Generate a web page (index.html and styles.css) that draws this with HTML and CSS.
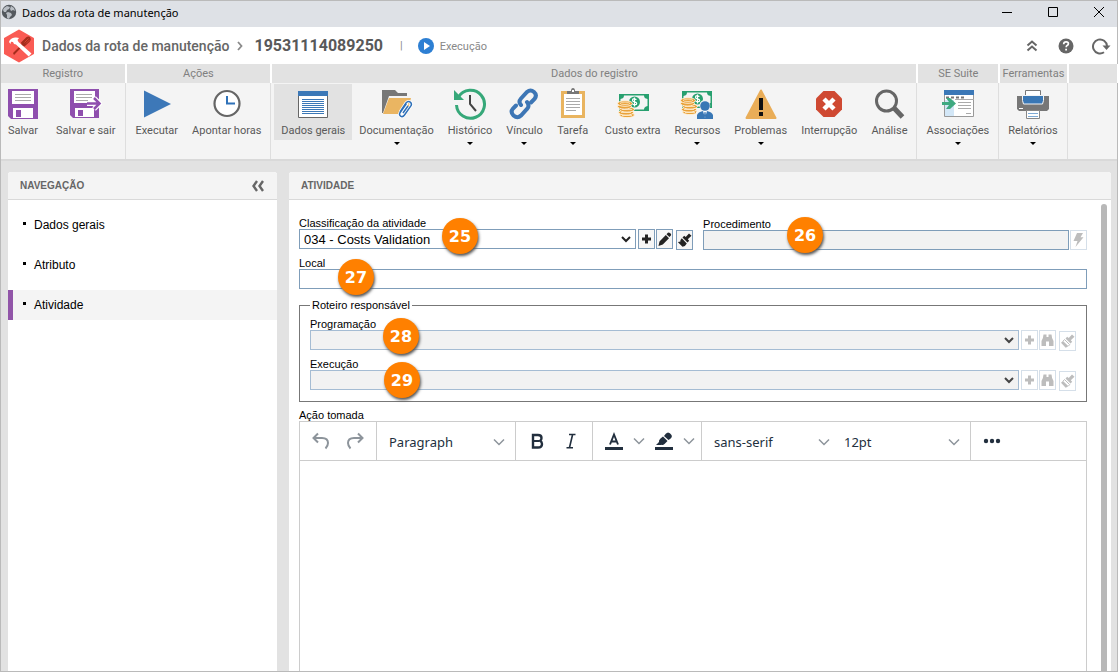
FILE: index.html
```html
<!DOCTYPE html>
<html lang="pt-BR">
<head>
<meta charset="utf-8">
<title>Dados da rota de manutenção</title>
<link rel="stylesheet" href="styles.css">
</head>
<body>
<svg class="defs" aria-hidden="true">
  <defs>
    <symbol id="plus" viewBox="0 0 15 18"><path d="M6 4.500h3v3h3v3H9v3H6v-3H3v-3h3z"/></symbol>
    <symbol id="pencil" viewBox="0 0 15 18"><path d="M1.500 16l1-4.500L8.800 5l3.200 3.200L5.800 14.500zM9.500 4.200l1.400-1.400q1-.8 2 .1l.9.900q.8 1-.1 2l-1.300 1.300z"/></symbol>
    <symbol id="brush" viewBox="0 0 15 18"><path d="M12 2.500l2.500 2.200-3.700 3.600 1.400 1.500-1.700 1.700-5-5L7.200 4.800l1.500 1.300zM4.800 7.300l5 5.100q-1.300 2.800-4.300 3.400L1 11.200l1.300-.8.800.9.400-2.300z"/></symbol>
    <symbol id="brush-open" viewBox="0 0 15 18"><path d="M12 2.500l2.500 2.200-3.700 3.600 1.400 1.500-1.700 1.700-5-5L7.200 4.800l1.500 1.300zM1 10.700l4.700 5q1.500-.4 2.500-1.600L3 9z"/><path d="M4.500 7.500l5.200 5.200-1.600 1.600M4.500 7.500L3 9.200" fill="none" stroke="currentColor"/></symbol>
    <symbol id="binoculars" viewBox="0 0 15 18"><path d="M3.500 3.500h3V6h2V3.500h3l.6 3.500 1.400 3v5H9v-4.500H6V15H1.500v-5l1.400-3z"/></symbol>
    <symbol id="bolt" viewBox="0 0 15 18"><path d="M6 2h6L9.500 6.300H12.500L4.500 16l2-6H2.500z"/></symbol>
    <symbol id="chevron" viewBox="0 0 10 7"><path d="M1 1l4 4 4-4" fill="none" stroke="currentColor" stroke-width="2"/></symbol>
    <symbol id="thin-chevron" viewBox="0 0 12 8"><path d="M1 1.500l5 5 5-5" fill="none" stroke="#8d949b" stroke-width="1.500"/></symbol>
    <symbol id="cash" viewBox="0 0 32 32">
      <path fill="#27a06f" d="M2 6h30v17H2z"/><path fill="#f4f4f4" d="M7 7.500h20q0 3 3.500 3.500v7q-3.500.5-3.500 3.500H7q0-3-3.500-3.500v-7Q7 10.500 7 7.500z"/>
      <circle cx="17.500" cy="14" r="5.500" fill="#27a06f"/><path d="M19.500 11.500q-4-1.500-4 .7 0 1.300 2 1.600 2.200.3 2.200 1.700 0 2-4.200.7M17.500 9.500v9" fill="none" stroke="#fff" stroke-width="1.200"/>
      <g fill="#e9a23b" stroke="#fff3dc" stroke-width=".9"><ellipse cx="10" cy="27" rx="7.500" ry="2.600"/><ellipse cx="9" cy="24.500" rx="7.500" ry="2.600"/><ellipse cx="10" cy="21.500" rx="7.500" ry="2.600"/><ellipse cx="7.500" cy="18.500" rx="7" ry="2.600"/><ellipse cx="8" cy="15.500" rx="7.500" ry="2.800"/></g>
      <g fill="none" stroke="#fff3dc" stroke-width=".7"><ellipse cx="8" cy="15.300" rx="4.800" ry="1.200"/><path d="M5 21.500h10M4 24.500h10M5 27.500h10"/></g>
    </symbol>
  </defs>
</svg>
<div class="window">
  <header class="titlebar">
    <svg class="globe" width="16" height="16" viewBox="0 0 16 16"><circle cx="8" cy="8" r="7.200" fill="#54595e"/><path d="M3 4l3-2 3 1-1 2-2 1-1 2H3L2 6zM10 2l3 2 1 3-2-1-2 1-1-2zM7 8l3 1 1 2-2 2-1 2-2-1V11L5 9z" fill="#b9bec4"/></svg>
    <span class="titlebar-text">Dados da rota de manutenção</span>
    <div class="window-controls">
      <button type="button" aria-label="Minimizar"><svg width="12" height="12"><path d="M1 6.500h10" stroke="#000"/></svg></button>
      <button type="button" aria-label="Maximizar"><svg width="12" height="12"><path d="M1.500 1.500h9v9h-9z" fill="none" stroke="#000"/></svg></button>
      <button type="button" aria-label="Fechar"><svg width="12" height="12"><path d="M1 1l10 10M11 1L1 11" stroke="#000"/></svg></button>
    </div>
  </header>

  <div class="heading">
    <svg class="module-icon" width="32" height="34" viewBox="0 0 32 34"><path d="M16 1.500L30 9.500v15L16 32.500 2 24.500v-15z" fill="#fa5b54" stroke="#fa5b54" stroke-width="2" stroke-linejoin="round"/><path d="M10 24l8.500-8.500-.5-2 5-5q3-2 4.500.5 1 2-1 4l-5 4.500-2-.2L11 26z" fill="#a52c1c"/><path d="M21.500 13.500l4-4M23 14.500l3.500-3.500" stroke="#d8402f"/><path d="M6 13q1-4 6-4.500 3-.2 4 .5l-1.500 2 1 2 13 11.500-2.800 3L13 15.500l-2-.5-1-2-2-.2L7.500 15z" fill="#fff"/></svg>
    <h1>Dados da rota de manutenção</h1>
    <svg class="crumb" width="6" height="10"><path d="M1 1l3.500 4L1 9" fill="none" stroke="#8a8a8a" stroke-width="1.800"/></svg>
    <strong class="record">19531114089250</strong>
    <span class="bar">|</span>
    <svg class="play" width="16" height="16"><circle cx="8" cy="8" r="8" fill="#2d7fd3"/><path d="M6 4l6 4-6 4z" fill="#fff"/></svg>
    <span class="status">Execução</span>
    <div class="heading-actions">
      <button type="button" aria-label="Recolher"><svg width="18" height="18"><path d="M4.500 8.500L9 4.500l4.500 4M4.500 13.500L9 9.500l4.500 4" fill="none" stroke="#666" stroke-width="2"/></svg></button>
      <button type="button" aria-label="Ajuda"><svg width="18" height="18"><circle cx="9" cy="9" r="7.500" fill="#666"/><path d="M6.700 7.200q0-2.300 2.400-2.300 2.300 0 2.300 1.900 0 1.100-1.300 1.800-.9.500-.9 1.700" fill="none" stroke="#fff" stroke-width="1.700"/><path d="M8.200 11.700H10v1.700H8.200z" fill="#fff"/></svg></button>
      <button type="button" aria-label="Atualizar"><svg width="20" height="18"><path d="M13 15.200A7 7 0 1 1 16 9" fill="none" stroke="#666" stroke-width="2"/><path d="M11.500 8.500h8L15.500 13z" fill="#666"/></svg></button>
    </div>
  </div>

  <nav class="ribbon" aria-label="Ferramentas">
    <section class="group first">
      <h2>Registro</h2>
      <div class="tools">
        <button type="button" class="tool"><svg width="32" height="32"><path fill="#8f4fae" d="M1 1h30v30H4l-3-3z"/><path fill="#fff" d="M5 3h22v13H5zM6 20h20v10H6z"/><path d="M8 6.500h16M8 9.500h16M8 12.500h16" stroke="#aaa"/><path fill="#8f4fae" d="M9 22h5v7H9z"/></svg><span>Salvar</span></button>
        <button type="button" class="tool wide"><svg width="32" height="32"><path fill="#8f4fae" d="M0 1h29v29H3l-3-3z"/><path fill="#fff" d="M4 3h21v12H4zM5 20h19v9H5z"/><path d="M6 6.500h16M6 9.500h16M6 12.500h12" stroke="#aaa"/><path fill="#8f4fae" d="M8 22h5v6H8z"/><path d="M17 15.500h9M24 10l5.500 5.500L24 21" fill="none" stroke="#fff" stroke-width="5"/><path d="M17 15.500h12M24 10l5.500 5.500L24 21" fill="none" stroke="#8f4fae" stroke-width="2.500"/></svg><span>Salvar e sair</span></button>
      </div>
    </section>
    <section class="group roomy">
      <h2>Ações</h2>
      <div class="tools">
        <button type="button" class="tool"><svg width="32" height="32"><path fill="#3d78b8" d="M3 2.500L30 16 3 29.500z"/></svg><span>Executar</span></button>
        <button type="button" class="tool"><svg width="32" height="32"><circle cx="16" cy="15.500" r="12.500" fill="#fff" stroke="#666" stroke-width="2.200"/><path d="M16 8v7.500h8" fill="none" stroke="#2f72b9" stroke-width="2"/></svg><span>Apontar horas</span></button>
      </div>
    </section>
    <section class="group roomy">
      <h2>Dados do registro</h2>
      <div class="tools">
        <button type="button" class="tool active"><svg width="32" height="32"><path fill="#fff" stroke="#666" d="M1.500 3.500h29v26h-29z"/><path fill="#3b78b7" d="M1 3h30v5H1z"/><path d="M5 11.500h22M5 13.500h22M5 15.500h22M5 17.500h22M5 19.500h22M5 21.500h22M5 23.500h22M5 25.500h22" stroke="#3b78b7"/></svg><span>Dados gerais</span></button>
        <button type="button" class="tool menu"><svg width="32" height="32"><path fill="#777" d="M1 2h13l3 3h9v3H8L2 25H1z"/><path fill="#eab562" d="M8 10h22l-4 16H2z"/><path d="M19 24l6-9q2-2.500 4.300-.8 2 1.600.4 4L23.500 27q-1.800 2.500-3.900 1.200-2-1.500-.3-3.900l6-8.500M21 27l6-8.500M22 21l4.500-6" fill="none" stroke="#fff" stroke-width="3"/><path d="M19 24l6-9q2-2.500 4.300-.8 2 1.600.4 4L23.500 27q-1.800 2.500-3.900 1.200-2-1.500-.3-3.900l6-8.500M22 25l5-7" fill="none" stroke="#2d6fb8" stroke-width="1.500"/></svg><span>Documentação</span></button>
        <button type="button" class="tool menu"><svg width="34" height="32"><path d="M5.500 9A14 14 0 1 1 3.500 17" fill="none" stroke="#36a879" stroke-width="3"/><path fill="#36a879" d="M1 2v10h10l-3-3z"/><path d="M17 7v9l6 7" fill="none" stroke="#444" stroke-width="2"/></svg><span>Histórico</span></button>
        <button type="button" class="tool menu"><svg width="32" height="32"><g fill="none" stroke="#3d76b5" stroke-width="4" stroke-linecap="round"><path d="M13 17q-3-3 0-6.500l6-6.500q3.500-3 7 0t.5 7l-3.500 3.500"/><path d="M19 14q3 4 0 7l-6 6.500q-3.500 3.500-7.500 0-3.500-3.500-.5-7L8 17.500"/></g></svg><span>Vínculo</span></button>
        <button type="button" class="tool menu"><svg width="32" height="32"><path fill="#e9b45f" d="M4 3h24v27H4z"/><path fill="#fff" d="M7 6h18v21H7z"/><path fill="#777" d="M10 6V3h4q0-3 2-3t2 3h4v3z"/><path fill="#fff" d="M15 2h2v2h-2z"/><path d="M9 10.500h14M9 13.500h14M9 16.500h14M9 19.500h14M9 22.500h10" stroke="#aaa"/></svg><span>Tarefa</span></button>
        <button type="button" class="tool cost"><svg width="32" height="32"><use href="#cash"/></svg><span>Custo extra</span></button>
        <button type="button" class="tool menu"><svg width="34" height="32"><use href="#cash" y="-3" width="32" height="32"/><path fill="#f4f4f4" d="M16 32V24l4-3q-2-8 4-9 7 0 6 8l4 4v8z"/><circle cx="25" cy="18" r="4.800" fill="#3977b5"/><path fill="#3977b5" d="M17 31v-4q1-3 6-4h4q5 1 6 4v4z"/><path fill="#fff" d="M23 23h4l-2 7z"/><path fill="#3977b5" d="M24.500 24h1l.6 4-1.100 2-1.100-2z"/></svg><span>Recursos</span></button>
        <button type="button" class="tool menu"><svg width="34" height="32"><path d="M17 2.500L31.500 30h-29z" fill="#e9ad58" stroke="#e9ad58" stroke-width="2" stroke-linejoin="round"/><path d="M15 10h4v12h-4zM15 24h4v4h-4z" fill="#111"/></svg><span>Problemas</span></button>
        <button type="button" class="tool"><svg width="32" height="32"><path fill="#cf4932" d="M10.500 3h11L29 10.500v11L21.500 29h-11L3 21.500v-11z"/><path d="M11 11l10 10M21 11L11 21" stroke="#fff" stroke-width="4.500"/></svg><span>Interrupção</span></button>
        <button type="button" class="tool"><svg width="32" height="32"><circle cx="13.500" cy="13" r="10" fill="none" stroke="#666" stroke-width="3"/><path d="M21 20l8.500 9" stroke="#666" stroke-width="5"/></svg><span>Análise</span></button>
      </div>
    </section>
    <section class="group">
      <h2>SE Suite</h2>
      <div class="tools">
        <button type="button" class="tool menu"><svg width="34" height="32"><path fill="#fff" stroke="#999" d="M3.500 2.500h29v26h-29z"/><path fill="#3b78b7" d="M3 2h30v5H3z"/><path fill="#d3e7f7" d="M4 12h9v16H4z"/><path d="M5 9.500h18" stroke="#777" stroke-width="2" stroke-dasharray="3 2"/><path d="M14 11.500h19M17 14.500h13M17 17.500h13M17 20.500h13M25 25.500h5" stroke="#aaa"/><path fill="#3fa981" d="M1 14h7l-3-4h4l6 5.500-6 5.500H5l3-4H1z"/></svg><span>Associações</span></button>
      </div>
    </section>
    <section class="group">
      <h2>Ferramentas</h2>
      <div class="tools">
        <button type="button" class="tool menu"><svg width="32" height="32"><path fill="#fff" stroke="#777" d="M8.500 2.500h15v8h-15z"/><path fill="#777" d="M0 8h32v13l-2 2H2l-2-2z"/><path fill="#3977b5" stroke="#f4f4f4" d="M5.500 7.500h21v5l-1 3.500h-19l-1-3.500z"/><path d="M2 20.500h4" stroke="#fff"/><path fill="#fff" stroke="#888" d="M9.500 22.500h13v8h-13z"/><path d="M11 25.500h10M11 28.500h10" stroke="#7eaad5"/></svg><span>Relatórios</span></button>
      </div>
    </section>
    <div class="group rest"><div class="rest-head"></div></div>
  </nav>

  <div class="workspace">
    <aside class="panel side">
      <div class="panel-head"><h2>NAVEGAÇÃO</h2><button type="button" aria-label="Recolher navegação"><svg width="14" height="12"><path d="M6 1L2.500 6 6 11M12 1L8.500 6l3.500 5" fill="none" stroke="#666" stroke-width="2.400"/></svg></button></div>
      <ul>
        <li><a href="#dados">Dados gerais</a></li>
        <li><a href="#atributo">Atributo</a></li>
        <li class="current"><a href="#atividade">Atividade</a></li>
      </ul>
    </aside>

    <main class="panel content">
      <div class="panel-head"><h2>ATIVIDADE</h2></div>
      <div class="panel-body">
        <form>
          <div class="pair">
            <div class="field">
              <label for="classe">Classificação da atividade</label>
              <div class="control">
                <div class="select"><select id="classe"><option>034 - Costs Validation</option></select><svg width="10" height="7"><use href="#chevron"/></svg></div>
                <div class="minis">
                  <button type="button" aria-label="Adicionar"><svg><use href="#plus"/></svg></button>
                  <button type="button" aria-label="Editar"><svg><use href="#pencil"/></svg></button>
                  <button type="button" class="clear" aria-label="Limpar"><svg><use href="#brush"/></svg></button>
                </div>
                <span class="badge b25">25</span>
              </div>
            </div>
            <div class="field lower">
              <label for="proc">Procedimento</label>
              <div class="control tight">
                <input id="proc" type="text" disabled>
                <div class="minis"><button type="button" disabled aria-label="Executar procedimento"><svg><use href="#bolt"/></svg></button></div>
                <span class="badge b26">26</span>
              </div>
            </div>
          </div>
          <div class="field local">
            <label for="local">Local</label>
            <div class="control"><input id="local" type="text"><span class="badge b27">27</span></div>
          </div>
          <fieldset>
            <legend>Roteiro responsável</legend>
            <div class="field">
              <label for="prog">Programação</label>
              <div class="control">
                <div class="select"><select id="prog" disabled></select><svg width="10" height="7"><use href="#chevron"/></svg></div>
                <div class="minis">
                  <button type="button" disabled aria-label="Adicionar"><svg><use href="#plus"/></svg></button>
                  <button type="button" disabled aria-label="Procurar"><svg><use href="#binoculars"/></svg></button>
                  <button type="button" disabled class="clear" aria-label="Limpar"><svg><use href="#brush-open"/></svg></button>
                </div>
                <span class="badge b28">28</span>
              </div>
            </div>
            <div class="field">
              <label for="exec">Execução</label>
              <div class="control">
                <div class="select"><select id="exec" disabled></select><svg width="10" height="7"><use href="#chevron"/></svg></div>
                <div class="minis">
                  <button type="button" disabled aria-label="Adicionar"><svg><use href="#plus"/></svg></button>
                  <button type="button" disabled aria-label="Procurar"><svg><use href="#binoculars"/></svg></button>
                  <button type="button" disabled class="clear" aria-label="Limpar"><svg><use href="#brush-open"/></svg></button>
                </div>
                <span class="badge b29">29</span>
              </div>
            </div>
          </fieldset>
          <label class="action-label" for="acao">Ação tomada</label>
          <div class="editor">
            <div class="toolbar">
              <div class="bar-group">
                <button type="button" aria-label="Desfazer"><svg width="20" height="20"><path d="M7 2.500L2.500 7 7 11.500M3 7h8q6 0 6 5 0 3-2.500 5.500" fill="none" stroke="#8d949b" stroke-width="2"/></svg></button>
                <button type="button" aria-label="Refazer"><svg width="20" height="20"><path d="M13 2.500L17.500 7 13 11.500M17 7H9q-6 0-6 5 0 3 2.500 5.500" fill="none" stroke="#8d949b" stroke-width="2"/></svg></button>
              </div>
              <div class="bar-group"><button type="button" class="pick">Paragraph<svg width="12" height="8"><use href="#thin-chevron"/></svg></button></div>
              <div class="bar-group">
                <button type="button" aria-label="Negrito"><svg width="20" height="20"><path d="M6 4h5q3.500 0 3.500 3 0 2-1.300 2.800Q15 10.600 15 13q0 3.500-4 3.500H6z" fill="none" stroke="#222f3e" stroke-width="2.400"/><path d="M6 10h6" stroke="#222f3e" stroke-width="2"/></svg></button>
                <button type="button" aria-label="Itálico"><svg width="20" height="20"><path d="M8 3.500h6.500M5.500 16.700H12M11.500 4L8.500 16.500" fill="none" stroke="#222f3e" stroke-width="1.600"/></svg></button>
              </div>
              <div class="bar-group">
                <button type="button" class="split" aria-label="Cor do texto"><svg width="20" height="20"><path d="M1 16h18v3H1z" fill="#222f3e"/><path d="M6 13.500L10 3.500l4 10M7 10.500h6" fill="none" stroke="#222f3e" stroke-width="1.900"/></svg><svg width="12" height="8"><use href="#thin-chevron"/></svg></button>
                <button type="button" class="split" aria-label="Cor de fundo"><svg width="20" height="20"><path d="M1 16h18v3H1z" fill="#222f3e"/><path d="M2 14l3-3q-.5-2 1.500-3.500L9 5.500l4.500 4.500-3 3q-1.500 1.500-3 .8L7 14zM10 5q2-3.500 4-3.500T17.500 4t-3 5z" fill="#222f3e"/></svg><svg width="12" height="8"><use href="#thin-chevron"/></svg></button>
              </div>
              <div class="bar-group">
                <button type="button" class="pick">sans-serif<svg width="12" height="8"><use href="#thin-chevron"/></svg></button>
                <button type="button" class="pick">12pt<svg width="12" height="8"><use href="#thin-chevron"/></svg></button>
              </div>
              <div class="bar-group"><button type="button" aria-label="Mais"><svg width="18" height="6"><g fill="#222f3e"><circle cx="3" cy="3" r="2.200"/><circle cx="9" cy="3" r="2.200"/><circle cx="15" cy="3" r="2.200"/></g></svg></button></div>
            </div>
            <textarea id="acao"></textarea>
          </div>
        </form>
        <div class="scroll-thumb"></div>
      </div>
    </main>
  </div>
</div>
</body>
</html>
```
FILE: styles.css
```css
* { box-sizing: border-box; }
body { margin: 0; font-family: "Liberation Sans", Arial, sans-serif; color: #000; }
h1, h2, ul { margin: 0; padding: 0; font-weight: normal; }
button { margin: 0; padding: 0; border: 0; background: none; font: inherit; color: inherit; }
svg { display: block; flex: none; }
.defs { position: absolute; width: 0; height: 0; }

.window { display: flex; flex-direction: column; min-height: 100vh; border: 1px solid #bababa; background: #e2e2e2; }

.titlebar { display: flex; align-items: center; height: 26px; padding-bottom: 4px; background: #dee1e6; font: 11px "Noto Sans", sans-serif; }
.titlebar-text { margin-left: 5px; }
.window-controls { display: flex; gap: 34px; margin-left: auto; padding-right: 12px; }

.heading { display: flex; align-items: center; height: 37px; padding: 0 6px 0 2px; background: #fff; font-family: Roboto, sans-serif; color: #595959; }
.heading h1 { margin-left: 7px; font-size: 14px; font-weight: 500; color: #666; }
.crumb { margin-left: 8px; }
.record { margin-left: 11px; font-size: 16px; }
.bar { margin-left: 17px; font-size: 11px; color: #888; }
.play { margin-left: 15px; }
.status { margin-left: 6px; padding-top: 2px; font-size: 11px; color: #888; }
.heading-actions { display: flex; gap: 16px; margin-left: auto; }

.ribbon { display: flex; height: 97px; border-bottom: 2px solid #d9d9d9; background: #f4f4f4; font: 11px/14px Roboto, sans-serif; color: #595959; }
.group { border-right: 1px solid #dedede; }
.group h2, .rest-head { height: 19px; margin-right: -1px; border-right: 1px solid #fff; background: #e2e2e2; font-size: 11px; line-height: 19px; text-align: center; color: #808080; }
.group + .group h2, .group + .rest .rest-head { border-left: 1px solid #fff; }
.tools { display: flex; align-items: flex-start; padding: 1px 2px 0; }
.roomy .tools { padding-left: 3px; }
.first .tools { padding-left: 0; }
.tool { display: flex; flex-direction: column; align-items: center; gap: 4px; padding: 4px 7px 2px; line-height: 14px; white-space: nowrap; }
.tool.active { background: #e2e2e2; }
.tool.menu::after { content: ""; border: 3px solid transparent; border-top-color: #000; border-bottom: 0; }
.first .tool { padding-left: 6px; }
.first .wide { padding-left: 10px; }
.cost { margin-left: 2px; }
.rest { flex: 1; border-right: 0; }

.workspace { display: flex; flex: 1; gap: 12px; padding: 11px 6px 0 7px; }
.panel { display: flex; flex-direction: column; background: #fff; border-radius: 3px 3px 0 0; }
.side { flex: 0 0 269px; }
.content { flex: 1; min-width: 0; }
.panel-head { display: flex; align-items: center; justify-content: space-between; height: 28px; padding: 0 12px; border-bottom: 1px solid #d9d9d9; border-radius: 3px 3px 0 0; background: #f4f4f4; }
.panel-head h2 { font-size: 10px; font-weight: bold; color: #666; }
.side ul { padding-top: 10px; list-style: none; }
.side li { display: flex; align-items: center; height: 30px; margin-bottom: 10px; padding-left: 10px; border-left: 5px solid transparent; font-size: 12px; }
.side li::before { content: ""; width: 3px; height: 3px; margin-bottom: 3px; background: #000; }
.side li.current { border-color: #9155a8; background: #f4f4f4; }
.side a { margin-left: 8px; color: #000; text-decoration: none; }

.panel-body { display: flex; flex: 1; padding-left: 10px; padding-right: 4px; gap: 14px; }
form { display: flex; flex: 1; flex-direction: column; min-width: 0; padding-top: 17px; }
.scroll-thumb { flex: none; width: 6px; margin-top: 4px; border-radius: 3px 3px 0 0; background: #b8b8b8; }
.pair { display: grid; grid-template-columns: 39fr 38fr; gap: 10px; }
.lower { padding-top: 1px; }
.local { margin-top: 7px; }
label { display: block; font-size: 11px; line-height: 12px; }
.control { position: relative; display: flex; gap: 2px; height: 20px; }
.control.tight { gap: 1px; }
.control input, .select { flex: 1; min-width: 0; height: 20px; border: 1px solid #7f9db9; background: #fff; }
.control input { padding: 0 4px; font: 13px "Liberation Sans", Arial, sans-serif; }
.control input:disabled { background: #f2f2f2; }
.select { position: relative; color: #222; }
.select select { width: 100%; height: 18px; padding: 0 20px 0 4px; border: 0; appearance: none; background: none; font: 13px/18px "Liberation Sans", Arial, sans-serif; color: #000; }
.select svg { position: absolute; right: 4px; top: 6px; }
.select:has(select:disabled) { border-color: #a5bcd3; background: #f2f2f2; color: #444; }
.minis { display: flex; gap: 1px; }
.minis button { width: 17px; height: 20px; border: 1px solid #7f9db9; background: #f6f6f6; color: #222; }
.minis button svg { width: 15px; height: 18px; fill: currentColor; }
.minis button:disabled { border-color: #d5dfe9; background: #fff; color: #bdbdbd; }
.minis .clear { margin-left: 2px; margin-top: 1px; }
.badge { position: absolute; display: grid; place-items: center; width: 36px; height: 36px; border-radius: 50%; background: #ff8000; box-shadow: 1px 2px 3px #555; font: bold 16px "DejaVu Sans", Verdana, sans-serif; color: #fff; }
.b25 { left: 143px; top: -11px; }
.b26 { left: 84px; top: -13px; }
.b27 { left: 39px; top: -10px; }
.b28 { left: 73px; top: -12px; }
.b29 { left: 74px; top: -8px; }

fieldset { display: grid; gap: 8px; min-width: 0; margin: 10px 0 0; padding: 7px 10px 11px; border: 1px solid #777; }
legend { margin-left: 0; padding: 0 2px; font-size: 11px; line-height: 12px; }
.action-label { margin-top: 7px; }
.editor { display: flex; flex: 1; flex-direction: column; border: 1px solid #ccc; border-bottom: 0; }
.toolbar { display: flex; height: 39px; border-bottom: 1px solid #ccc; font: 13px "Noto Sans", sans-serif; color: #222f3e; }
.bar-group { display: flex; padding: 0 4px; border-right: 1px solid #ccc; }
.bar-group:last-child { border-right: 0; }
.toolbar button { display: flex; align-items: center; justify-content: center; width: 34px; height: 38px; }
.toolbar .pick { justify-content: space-between; width: 130px; height: 40px; padding: 0 6px 0 8px; }
.toolbar .split { justify-content: flex-start; gap: 9px; width: 50px; padding-left: 7px; }
textarea { flex: 1; width: 100%; min-height: 200px; border: 0; background: #fff; resize: none; outline: 0; }
```
